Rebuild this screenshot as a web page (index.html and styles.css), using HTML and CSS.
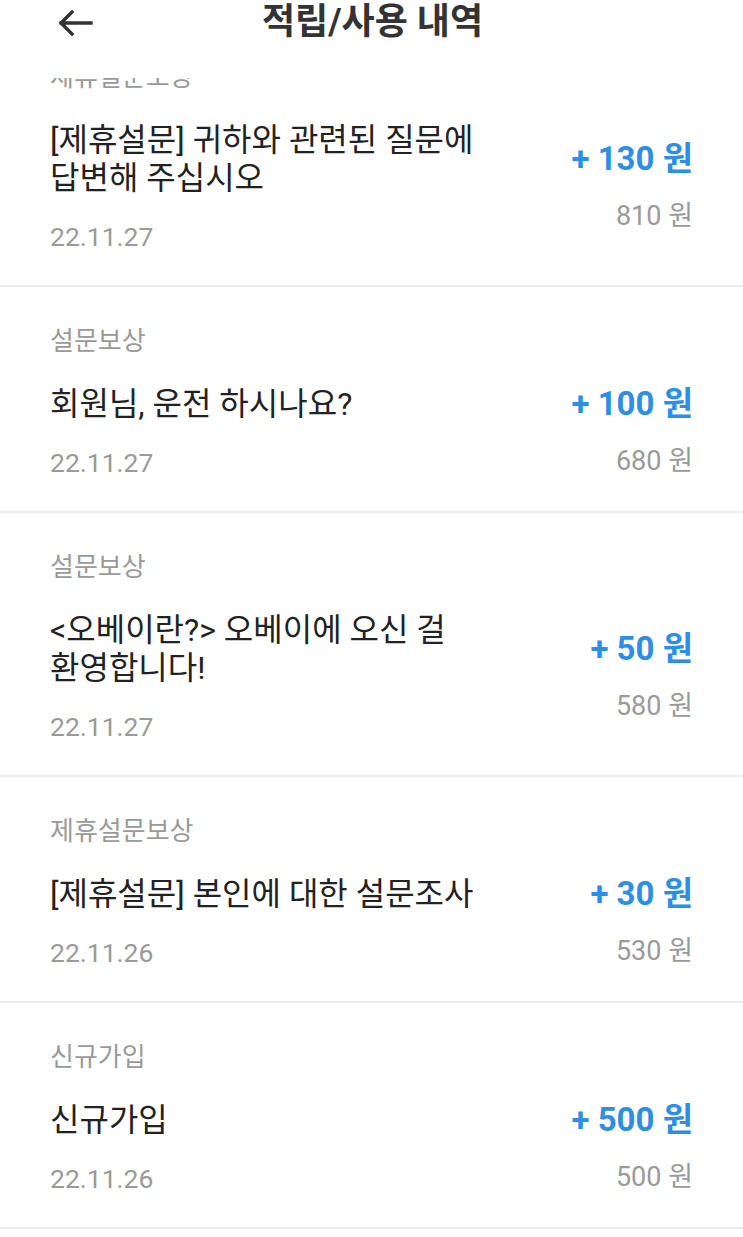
FILE: index.html
```html
<!DOCTYPE html>
<html lang="ko">
<head>
<meta charset="utf-8">
<title>적립/사용 내역</title>
<link rel="stylesheet" href="styles.css">
</head>
<body>
<header class="topbar">
  <span class="back" aria-label="뒤로">
    <svg width="36" height="26" viewBox="0 0 36 26"><path d="M34 13H4M15 2L4 13l11 11" fill="none" stroke="#333" stroke-width="3.4" stroke-linecap="square"/></svg>
  </span>
  <h1 class="title">적립/사용 내역</h1>
</header>
<main class="list">
  <div class="item">
    <div class="cat">제휴설문보상</div>
    <div class="left">
      <div class="name">[제휴설문] 귀하와 관련된 질문에 답변해 주십시오</div>
      <div class="date">22.11.27</div>
    </div>
    <div class="right">
      <div class="amount">+ 130 원</div>
      <div class="balance">810 원</div>
    </div>
  </div>
  <div class="item">
    <div class="cat">설문보상</div>
    <div class="left">
      <div class="name">회원님, 운전 하시나요?</div>
      <div class="date">22.11.27</div>
    </div>
    <div class="right">
      <div class="amount">+ 100 원</div>
      <div class="balance">680 원</div>
    </div>
  </div>
  <div class="item">
    <div class="cat">설문보상</div>
    <div class="left">
      <div class="name">&lt;오베이란?&gt; 오베이에 오신 걸 환영합니다!</div>
      <div class="date">22.11.27</div>
    </div>
    <div class="right">
      <div class="amount">+ 50 원</div>
      <div class="balance">580 원</div>
    </div>
  </div>
  <div class="item">
    <div class="cat">제휴설문보상</div>
    <div class="left">
      <div class="name">[제휴설문] 본인에 대한 설문조사</div>
      <div class="date">22.11.26</div>
    </div>
    <div class="right">
      <div class="amount">+ 30 원</div>
      <div class="balance">530 원</div>
    </div>
  </div>
  <div class="item">
    <div class="cat">신규가입</div>
    <div class="left">
      <div class="name">신규가입</div>
      <div class="date">22.11.26</div>
    </div>
    <div class="right">
      <div class="amount">+ 500 원</div>
      <div class="balance">500 원</div>
    </div>
  </div>
</main>
</body>
</html>
```
FILE: styles.css
```css
html, body {
  margin: 0;
  padding: 0;
  background: #ffffff;
}
body {
  font-family: Roboto, "Noto Sans CJK KR", "Noto Sans", sans-serif;
  color: #222222;
}
.topbar {
  position: fixed;
  top: 0;
  left: 0;
  right: 0;
  height: 78px;
  background: #ffffff;
  z-index: 2;
}
.back {
  position: absolute;
  left: 57px;
  top: 10px;
  display: block;
  line-height: 0;
}
.title {
  margin: 0;
  text-align: center;
  font-size: 36px;
  font-weight: 700;
  line-height: 44px;
  color: #333333;
  padding-left: 2px;
}
.list {
  padding-top: 23px;
}
.item {
  display: grid;
  grid-template-columns: 1fr auto;
  column-gap: 40px;
  padding: 37px 50px 31px 50px;
  border-bottom: 2px solid #ececec;
}
.cat {
  grid-column: 1 / span 2;
  font-size: 26px;
  line-height: 34px;
  color: #9a9a9a;
  margin-bottom: 27px;
}
.left {
  display: flex;
  flex-direction: column;
  max-width: 460px;
}
.name {
  font-size: 32px;
  line-height: 38px;
  color: #222222;
  word-break: keep-all;
}
.date {
  margin-top: 23px;
  font-size: 26.5px;
  line-height: 34px;
  color: #9a9a9a;
}
.right {
  align-self: center;
  display: flex;
  flex-direction: column;
  align-items: flex-end;
  margin-top: -2px;
}
.amount {
  font-size: 33px;
  line-height: 38px;
  font-weight: 700;
  color: #2e8ee6;
  white-space: nowrap;
}
.balance {
  margin-top: 21px;
  font-size: 27px;
  line-height: 34px;
  color: #9a9a9a;
  white-space: nowrap;
}
```
